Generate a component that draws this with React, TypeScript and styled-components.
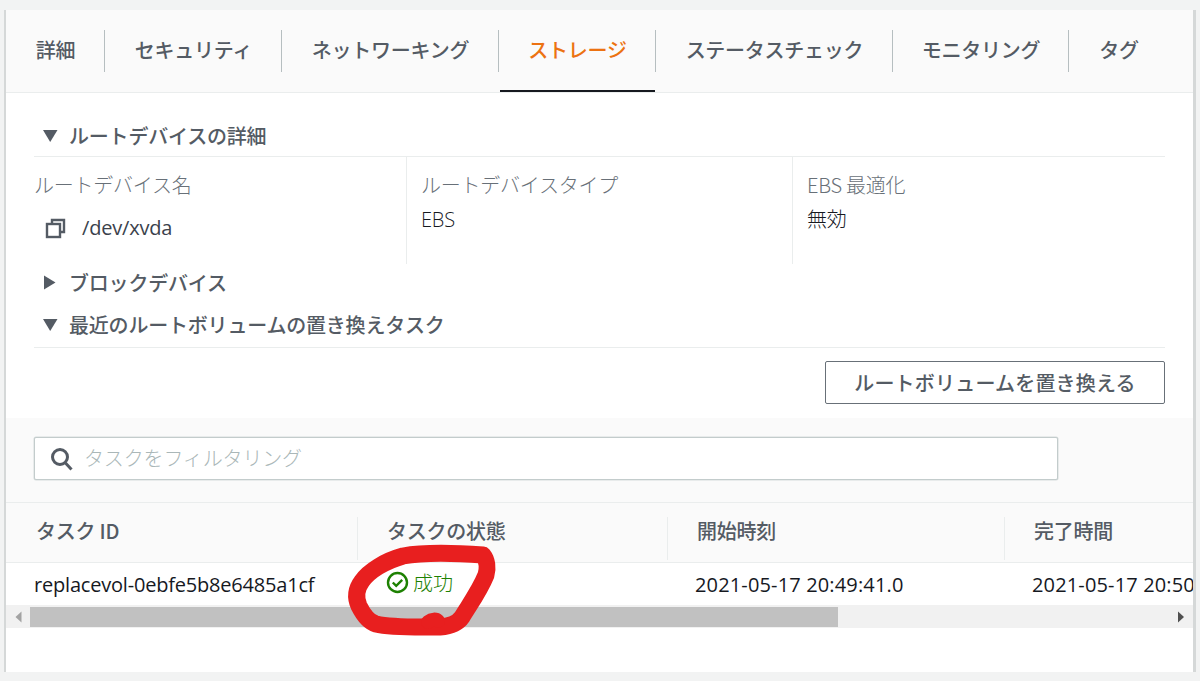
import React from "react";
import styled, { createGlobalStyle } from "styled-components";

const GlobalStyle = createGlobalStyle`
  html, body {
    margin: 0;
    padding: 0;
    background: #f2f3f3;
  }
  body {
    font-family: "Open Sans", "Noto Sans CJK JP", sans-serif;
    color: #16191f;
  }
`;

const Page = styled.div`
  width: 1200px;
  height: 681px;
  padding: 10px 4px 9px 4px;
  box-sizing: border-box;
  overflow: hidden;
`;

const Panel = styled.div`
  position: relative;
  height: 662px;
  background: #fff;
  border-left: 2px solid #d5d8d8;
  border-right: 3px solid #d5d8d8;
  overflow: hidden;
`;

const TabBar = styled.div`
  display: flex;
  align-items: stretch;
  height: 83px;
  background: #fafafa;
  border-bottom: 1px solid #eaeded;
  box-sizing: border-box;
`;

const Tab = styled.div<{ $width: number; $active?: boolean; $last?: boolean }>`
  position: relative;
  display: flex;
  align-items: center;
  justify-content: center;
  width: ${(p) => p.$width}px;
  padding-bottom: 4px;
  box-sizing: border-box;
  font-family: "Noto Sans CJK JP", sans-serif;
  font-size: 20px;
  font-weight: 500;
  letter-spacing: -0.25px;
  color: ${(p) => (p.$active ? "#ec7211" : "#545b64")};

  &::after {
    content: "";
    display: ${(p) => (p.$last ? "none" : "block")};
    position: absolute;
    right: 0;
    top: 20px;
    height: 42px;
    width: 1px;
    background: #b6bec0;
  }

  &::before {
    content: "";
    display: ${(p) => (p.$active ? "block" : "none")};
    position: absolute;
    left: 1px;
    right: 1px;
    bottom: 0;
    height: 2px;
    background: #16191f;
  }
`;

const Body = styled.div`
  padding: 0 28px;
`;

const SectionHead = styled.div<{ $top?: number; $bottom?: number; $height: number; $line?: boolean }>`
  display: flex;
  align-items: center;
  gap: 11px;
  height: ${(p) => p.$height}px;
  padding: ${(p) => p.$top ?? 0}px 0 ${(p) => p.$bottom ?? 0}px 9px;
  box-sizing: border-box;
  border-bottom: ${(p) => (p.$line ? "1px solid #eaeded" : "none")};
  font-family: "Noto Sans CJK JP", sans-serif;
  font-size: 20px;
  font-weight: 500;
  letter-spacing: -0.2px;
  color: #545b64;
`;

const Caret = styled.svg`
  flex: none;
  width: 15px;
  height: 15px;
  fill: #545b64;
`;

const DetailGrid = styled.div`
  display: grid;
  grid-template-columns: 372px 386px 1fr;
  height: 107px;
`;

const DetailCell = styled.div<{ $first?: boolean }>`
  padding: 14px 0 0 ${(p) => (p.$first ? 0 : 14)}px;
  border-left: ${(p) => (p.$first ? "none" : "1px solid #eaeded")};
`;

const KeyLabel = styled.div`
  font-family: "Noto Sans CJK JP", sans-serif;
  font-size: 20px;
  font-weight: 300;
  line-height: 28px;
  letter-spacing: -0.25px;
  color: #687078;
`;

const DetailValue = styled.div`
  margin-top: 7px;
  font-family: "Open Sans", "Noto Sans CJK JP", sans-serif;
  font-size: 20px;
  font-weight: 300;
  line-height: 28px;
  letter-spacing: -0.2px;
  color: #16191f;
`;

const CopyValue = styled(DetailValue)`
  display: flex;
  align-items: center;
  gap: 16px;
  margin-top: 15px;
  padding-left: 11px;
  font-weight: 400;
  color: #3b424c;
`;

const ButtonRow = styled.div`
  display: flex;
  justify-content: flex-end;
  padding-top: 13px;
  height: 70px;
  box-sizing: border-box;
`;

const OutlineButton = styled.button`
  width: 340px;
  height: 43px;
  padding: 0;
  background: #fff;
  border: 1px solid #687078;
  border-radius: 2px;
  font-family: "Noto Sans CJK JP", sans-serif;
  font-size: 20px;
  font-weight: 500;
  letter-spacing: 0.2px;
  color: #545b64;
`;

const FilterBar = styled.div`
  height: 85px;
  padding: 19px 0 0 28px;
  box-sizing: border-box;
  background: #fafafa;
  border-bottom: 1px solid #eaeded;
`;

const FilterInput = styled.div`
  display: flex;
  align-items: center;
  gap: 11px;
  width: 1024px;
  height: 43px;
  padding-left: 15px;
  box-sizing: border-box;
  background: #fff;
  border: 1px solid #c3cccc;
  box-shadow: 0 0 0 0.5px #d5dbdb;
  border-radius: 2px;
`;

const Placeholder = styled.span`
  padding-bottom: 2px;
  font-family: "Noto Sans CJK JP", sans-serif;
  font-size: 20px;
  font-weight: 300;
  letter-spacing: -0.15px;
  color: #aab7b8;
`;

const HeadRow = styled.div`
  display: grid;
  grid-template-columns: 351px 310px 337px 1fr;
  align-items: end;
  height: 60px;
  padding-bottom: 2px;
  box-sizing: border-box;
  background: #fafafa;
  border-bottom: 1px solid #eaeded;
`;

const HeadCell = styled.div<{ $first?: boolean }>`
  display: flex;
  align-items: center;
  height: 43px;
  padding-left: ${(p) => (p.$first ? 30 : 29)}px;
  padding-bottom: 16px;
  box-sizing: border-box;
  border-left: ${(p) => (p.$first ? "none" : "1px solid #eaeded")};
  font-family: "Noto Sans CJK JP", sans-serif;
  font-size: 20px;
  font-weight: 500;
  letter-spacing: -0.25px;
  color: #545b64;
`;

const DataRow = styled.div`
  display: grid;
  grid-template-columns: 351px 310px 337px 1fr;
  align-items: center;
  height: 42px;
`;

const DataCell = styled.div`
  padding-left: 28px;
  font-family: "Open Sans", "Noto Sans CJK JP", sans-serif;
  font-size: 20px;
  letter-spacing: 0.15px;
  white-space: nowrap;
  overflow: hidden;
  color: #16191f;
`;

const IdCell = styled(DataCell)`
  letter-spacing: -0.2px;
`;

const StatusCell = styled(DataCell)`
  display: flex;
  align-items: center;
  gap: 4px;
  padding: 0 0 3px 29px;
  font-family: "Noto Sans CJK JP", sans-serif;
  font-weight: 300;
  letter-spacing: 0;
  color: #1d8102;
`;

const ScrollBar = styled.div`
  display: flex;
  align-items: center;
  height: 23px;
  background: #f1f1f1;
`;

const ScrollArrow = styled.svg<{ $muted?: boolean }>`
  flex: none;
  width: 24px;
  height: 12px;
  fill: ${(p) => (p.$muted ? "#a3a3a3" : "#505050")};
`;

const ScrollTrack = styled.div`
  flex: 1;
  height: 20px;
`;

const ScrollThumb = styled.div`
  width: 808px;
  height: 100%;
  background: #c1c1c1;
`;

const Scribble = styled.svg`
  position: absolute;
  left: -6px;
  top: -10px;
  width: 1200px;
  height: 681px;
  pointer-events: none;
`;

const tabs = [
  { label: "詳細", width: 99 },
  { label: "セキュリティ", width: 177 },
  { label: "ネットワーキング", width: 217 },
  { label: "ストレージ", width: 157, active: true },
  { label: "ステータスチェック", width: 237 },
  { label: "モニタリング", width: 176 },
  { label: "タグ", width: 100, last: true },
];

const CaretDown = () => (
  <Caret viewBox="0 0 15 15">
    <path d="M0 2h14.5L7.2 14z" />
  </Caret>
);

const CaretRight = () => (
  <Caret viewBox="0 0 15 15">
    <path d="M1 0.5l11.5 7L1 14.5z" />
  </Caret>
);

const App: React.FC = () => {
  return (
    <Page>
      <GlobalStyle />
      <Panel>
        <TabBar>
          {tabs.map((t) => (
            <Tab key={t.label} $width={t.width} $active={t.active} $last={t.last}>
              {t.label}
            </Tab>
          ))}
        </TabBar>
        <Body>
          <SectionHead $height={64} $top={22} $line>
            <CaretDown />
            ルートデバイスの詳細
          </SectionHead>
          <DetailGrid>
            <DetailCell $first>
              <KeyLabel>ルートデバイス名</KeyLabel>
              <CopyValue>
                <svg width="21" height="21" viewBox="0 0 21 21" fill="none" stroke="#545b64" strokeWidth="2.4">
                  <rect x="2" y="6" width="13" height="13" />
                  <path d="M7 5V2h12v12h-3" />
                </svg>
                /dev/xvda
              </CopyValue>
            </DetailCell>
            <DetailCell>
              <KeyLabel>ルートデバイスタイプ</KeyLabel>
              <DetailValue>EBS</DetailValue>
            </DetailCell>
            <DetailCell>
              <KeyLabel>EBS 最適化</KeyLabel>
              <DetailValue>無効</DetailValue>
            </DetailCell>
          </DetailGrid>
          <SectionHead $height={40} $bottom={4}>
            <CaretRight />
            ブロックデバイス
          </SectionHead>
          <SectionHead $height={44} $bottom={2} $line>
            <CaretDown />
            最近のルートボリュームの置き換えタスク
          </SectionHead>
          <ButtonRow>
            <OutlineButton>ルートボリュームを置き換える</OutlineButton>
          </ButtonRow>
        </Body>
        <FilterBar>
          <FilterInput>
            <svg width="23" height="24" viewBox="0 0 23 24" fill="none" stroke="#545b64" strokeWidth="3">
              <circle cx="10" cy="10" r="7.5" />
              <path d="M15.5 16l6 6.5" />
            </svg>
            <Placeholder>タスクをフィルタリング</Placeholder>
          </FilterInput>
        </FilterBar>
        <HeadRow>
          <HeadCell $first>タスク ID</HeadCell>
          <HeadCell>タスクの状態</HeadCell>
          <HeadCell>開始時刻</HeadCell>
          <HeadCell>完了時間</HeadCell>
        </HeadRow>
        <DataRow>
          <IdCell>replacevol-0ebfe5b8e6485a1cf</IdCell>
          <StatusCell>
            <svg width="23" height="23" viewBox="0 0 23 23" fill="none" stroke="#1d8102" strokeWidth="2.4">
              <circle cx="11.5" cy="11.5" r="9.5" />
              <path d="M6.8 11.5l3.4 3.4 6-6" />
            </svg>
            成功
          </StatusCell>
          <DataCell>2021-05-17 20:49:41.0</DataCell>
          <DataCell>2021-05-17 20:50:12.0</DataCell>
        </DataRow>
        <ScrollBar>
          <ScrollArrow $muted viewBox="0 0 24 12">
            <path d="M15.5 0.5v11l-6-5.5z" />
          </ScrollArrow>
          <ScrollTrack>
            <ScrollThumb />
          </ScrollTrack>
          <ScrollArrow viewBox="0 0 24 12">
            <path d="M9 0.5v11l6-5.5z" />
          </ScrollArrow>
        </ScrollBar>
        <Scribble viewBox="0 0 1200 681">
          <path
            d="M483 555C455 553 425 552 403 556C385 561 369 571 362 581C356 589 355 597 359 606C364 616 369 622 376 624C392 628 420 627 440 627C452 626 458 623 462 617C470 604 480 590 486 575C488 568 487 560 483 555"
            fill="none"
            stroke="#e81f1f"
            strokeWidth="17"
            strokeLinecap="round"
            strokeLinejoin="round"
          />
          <path d="M428 622C432 619 436 619 438 621" fill="none" stroke="#e81f1f" strokeWidth="14" strokeLinecap="round" />
        </Scribble>
      </Panel>
    </Page>
  );
};

export default App;
